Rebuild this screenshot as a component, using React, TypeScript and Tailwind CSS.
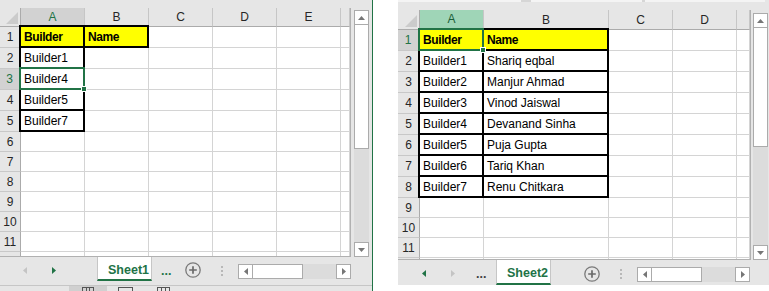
import React from 'react';

// Two Excel windows side by side, each showing a small sheet.

type Cell = { t?: string; b?: boolean; y?: boolean; box?: boolean; sel?: boolean };
type Col = { label: string; w: string; hl?: 'gray' | 'green' };
type Row = { n: string; h: string; hl?: boolean; last?: boolean; cells: Cell[] };

const Tri = ({ dir, color, className = '' }: { dir: 'up' | 'down' | 'left' | 'right'; color: string; className?: string }) => {
  const pts = { up: '0,4 3.5,0 7,4', down: '0,0 7,0 3.5,4', left: '4,0 4,7 0,3.5', right: '0,0 0,7 4,3.5' }[dir];
  const vertical = dir === 'up' || dir === 'down';
  return (
    <svg width={vertical ? 7 : 4} height={vertical ? 4 : 7} viewBox={vertical ? '0 0 7 4' : '0 0 4 7'} className={`shrink-0 ${className}`}>
      <polygon points={pts} fill={color} />
    </svg>
  );
};

const ArrowBox = ({ dir }: { dir: 'up' | 'down' | 'left' | 'right' }) => (
  <div className="flex h-[15px] w-[15px] shrink-0 items-center justify-center border border-[#ababab] bg-white">
    <Tri dir={dir} color="#767676" />
  </div>
);

const VScroll = ({ pad, thumb }: { pad: string; thumb: string }) => (
  <div className={`flex w-[15px] shrink-0 flex-col ${pad}`}>
    <ArrowBox dir="up" />
    <div className={`${thumb} border-x border-b border-[#ababab] bg-white`} />
    <div className="flex-1 bg-[#dcdcdc]" />
    <ArrowBox dir="down" />
  </div>
);

const HScroll = () => (
  <div className="mt-[7px] flex h-[15px] w-[113px] shrink-0">
    <ArrowBox dir="left" />
    <div className="w-[50px] border-y border-r border-[#ababab] bg-white" />
    <div className="flex-1 bg-[#dcdcdc]" />
    <ArrowBox dir="right" />
  </div>
);

const AddSheet = ({ className }: { className: string }) => (
  <svg width="16" height="16" viewBox="0 0 16 16" className={className}>
    <circle cx="8" cy="8" r="7.2" fill="none" stroke="#7a7a7a" strokeWidth="1.3" />
    <path d="M8 4.2v7.6M4.2 8h7.6" stroke="#6a6a6a" strokeWidth="1.7" />
  </svg>
);

const Grip = ({ className }: { className: string }) => (
  <div className={`flex flex-col gap-[2px] ${className}`}>
    <div className="h-[2px] w-[2px] bg-[#b8b8b8]" />
    <div className="h-[2px] w-[2px] bg-[#b8b8b8]" />
    <div className="h-[2px] w-[2px] bg-[#b8b8b8]" />
  </div>
);

const SheetTab = ({ name, h }: { name: string; h: string }) => (
  <div className={`flex w-[55px] shrink-0 items-center border-x border-b-2 border-x-[#c6c6c6] border-b-[#217346] bg-white pl-[10px] pt-[4px] text-[12.5px] font-bold text-[#217346] ${h}`}>
    {name}
  </div>
);

function DataCell({ c, w, h, last }: { c: Cell; w: string; h: string; last?: boolean }) {
  return (
    <div
      className={`relative flex shrink-0 items-center whitespace-nowrap border-r border-[#d4d4d4] pl-[3px] ${last ? '' : 'border-b'} ${w} ${h} ${c.y ? 'bg-[#ffff00]' : 'bg-white'} ${c.b ? 'text-[12px] font-bold tracking-[-0.4px]' : ''}`}
    >
      {c.t}
      {c.box && <div className="absolute -top-[2px] -left-[2px] -right-px -bottom-px z-10 border-2 border-black" />}
      {c.sel && (
        <div className="absolute -top-[2px] -left-[2px] -right-px -bottom-px z-20 border-2 border-[#217346]">
          <div className="absolute -right-[4px] -bottom-[4px] h-[6px] w-[6px] border border-white bg-[#217346]" />
        </div>
      )}
    </div>
  );
}

function Grid({ cols, rows, hdrW, hdrH, width }: { cols: Col[]; rows: Row[]; hdrW: string; hdrH: string; width: string }) {
  return (
    <div className={`flex shrink-0 flex-col overflow-hidden border-r border-b border-[#b1b1b1] bg-white text-[12px] ${width}`}>
      <div className="flex">
        <div className={`flex shrink-0 items-end justify-end border-r border-b border-[#ababab] bg-[#e6e6e6] pr-[2px] pb-[2px] ${hdrW} ${hdrH}`}>
          <svg width="12" height="12" viewBox="0 0 12 12">
            <polygon points="12,0 12,12 0,12" fill="#cbcbcb" />
          </svg>
        </div>
        {cols.map((col, i) => (
          <div
            key={i}
            className={`flex shrink-0 items-center justify-center border-r border-r-[#c6c6c6] ${col.w} ${hdrH} ${
              col.hl === 'gray'
                ? 'border-b-2 border-b-[#217346] bg-[#d2d2d2] text-[#217346]'
                : col.hl === 'green'
                ? 'border-b-2 border-b-[#217346] bg-[#9fd5b7] text-[#1b5e38]'
                : 'border-b border-b-[#ababab] bg-[#e6e6e6] text-[#262626]'
            }`}
          >
            {col.label}
          </div>
        ))}
      </div>
      {rows.map((row, r) => (
        <div key={r} className="flex">
          <div
            className={`flex shrink-0 items-center justify-center overflow-hidden border-b-[#c8c8c8] ${row.last ? '' : 'border-b'} ${hdrW} ${row.h} ${
              row.hl ? 'border-r-2 border-r-[#217346] bg-[#d2d2d2] text-[#217346]' : 'border-r border-r-[#ababab] bg-[#e6e6e6] text-[#262626]'
            }`}
          >
            {row.n}
          </div>
          {cols.map((col, i) => (
            <DataCell key={i} c={row.cells[i] ?? {}} w={col.w} h={row.h} last={row.last} />
          ))}
        </div>
      ))}
    </div>
  );
}

const blank = (n: string, h: string): Row => ({ n, h, cells: [] });

const leftCols: Col[] = [
  { label: 'A', w: 'w-[64px]', hl: 'gray' },
  { label: 'B', w: 'w-[64px]' },
  { label: 'C', w: 'w-[64px]' },
  { label: 'D', w: 'w-[64px]' },
  { label: 'E', w: 'w-[64px]' },
  { label: '', w: 'w-[9px]' },
];

const leftRows: Row[] = [
  { n: '1', h: 'h-[21px]', cells: [{ t: 'Builder', b: true, y: true, box: true }, { t: 'Name', b: true, y: true, box: true }] },
  { n: '2', h: 'h-[21px]', cells: [{ t: 'Builder1', box: true }] },
  { n: '3', h: 'h-[21px]', hl: true, cells: [{ t: 'Builder4', box: true, sel: true }] },
  { n: '4', h: 'h-[21px]', cells: [{ t: 'Builder5', box: true }] },
  { n: '5', h: 'h-[21px]', cells: [{ t: 'Builder7', box: true }] },
  blank('6', 'h-[20px]'),
  blank('7', 'h-[20px]'),
  blank('8', 'h-[20px]'),
  blank('9', 'h-[20px]'),
  blank('10', 'h-[20px]'),
  blank('11', 'h-[20px]'),
  { n: '', h: 'h-[4px]', last: true, cells: [] },
];

const rightCols: Col[] = [
  { label: 'A', w: 'w-[64px]', hl: 'green' },
  { label: 'B', w: 'w-[125px]' },
  { label: 'C', w: 'w-[64px]' },
  { label: 'D', w: 'w-[64px]' },
  { label: '', w: 'w-[13px]' },
];

const people = [
  ['Builder1', 'Shariq eqbal'],
  ['Builder2', 'Manjur Ahmad'],
  ['Builder3', 'Vinod Jaiswal'],
  ['Builder4', 'Devanand Sinha'],
  ['Builder5', 'Puja Gupta'],
  ['Builder6', 'Tariq Khan'],
  ['Builder7', 'Renu Chitkara'],
];

const rightRows: Row[] = [
  { n: '1', h: 'h-[21px]', hl: true, cells: [{ t: 'Builder', b: true, y: true, box: true, sel: true }, { t: 'Name', b: true, y: true, box: true }] },
  ...people.map(([a, b], i) => ({ n: String(i + 2), h: 'h-[21px]', cells: [{ t: a, box: true }, { t: b, box: true }] })),
  blank('9', 'h-[20px]'),
  blank('10', 'h-[20px]'),
  blank('11', 'h-[20px]'),
  { n: '', h: 'h-[1px]', last: true, cells: [] },
];

export default function App() {
  return (
    <div className="flex h-[291px] w-[769px] overflow-hidden bg-white font-['Liberation_Sans',Arial,sans-serif] text-[12.2px] text-black">
      {/* left window */}
      <div className="flex w-[372px] shrink-0 flex-col bg-[#e6e6e6]">
        <div className="h-[8px]" />
        <div className="flex">
          <Grid cols={leftCols} rows={leftRows} hdrW="w-[21px]" hdrH="h-[19px]" width="w-[351px]" />
          <div className="ml-[3px] flex">
            <VScroll pad="pt-[2px]" thumb="h-[124px]" />
          </div>
        </div>
        <div className="flex h-[28px] items-start">
          <div className="flex h-[24px] w-[97px] shrink-0 items-center pl-[23px] pt-[3px]">
            <Tri dir="left" color="#c4c4c4" />
            <Tri dir="right" color="#217346" className="ml-[25px]" />
          </div>
          <SheetTab name="Sheet1" h="h-[24px]" />
          <div className="flex h-[24px] w-[30px] shrink-0 items-center pl-[9px] pt-[4px] text-[12.5px] font-bold text-[#217346]">...</div>
          <div className="w-[28px] shrink-0 pl-[3px]">
            <AddSheet className="mt-[5px]" />
          </div>
          <div className="w-[28px] shrink-0 pl-[11px]">
            <Grip className="mt-[9px]" />
          </div>
          <HScroll />
        </div>
        <div className="flex h-[6px] border-t border-[#c6c6c6]">
          <div className="ml-[69px] flex h-full w-[38px] justify-center bg-[#d0d0d0] pt-[1px]">
            <div className="flex h-[5px] w-[12px] justify-evenly border-x border-t border-[#555]">
              <div className="w-px bg-[#555]" />
              <div className="w-px bg-[#555]" />
            </div>
          </div>
          <div className="ml-[11px] mt-[1px] h-[5px] w-[15px] border-x border-t border-[#555]" />
          <div className="ml-[24px] mt-[1px] flex h-[5px] w-[13px] justify-evenly border-x border-t border-[#555]">
            <div className="w-px bg-[#555]" />
            <div className="w-px bg-[#555]" />
          </div>
        </div>
      </div>

      {/* window border and gap */}
      <div className="w-px shrink-0 bg-[#217346]" />
      <div className="w-[25px] shrink-0 bg-white" />

      {/* right window */}
      <div className="flex w-[371px] shrink-0 flex-col bg-[#e6e6e6]">
        <div className="h-[10px]">
          <div className="flex h-[2px]">
            <div className="w-[123px] bg-[#f4f4f4]" />
            <div className="w-[10px] bg-[#d6d6d6]" />
            <div className="w-[111px] bg-[#f4f4f4]" />
            <div className="w-[3px] bg-[#d6d6d6]" />
            <div className="w-[120px] bg-[#f4f4f4]" />
          </div>
        </div>
        <div className="flex">
          <Grid cols={rightCols} rows={rightRows} hdrW="w-[22px]" hdrH="h-[20px]" width="w-[353px]" />
          <div className="ml-[2px] flex">
            <VScroll pad="pt-[3px]" thumb="h-[119px]" />
          </div>
        </div>
        <div className="flex h-[25px] items-start">
          <div className="flex h-[25px] w-[70px] shrink-0 items-center pl-[24px] pt-[2px]">
            <Tri dir="left" color="#217346" />
            <Tri dir="right" color="#c4c4c4" className="ml-[25px]" />
          </div>
          <div className="flex h-[25px] w-[28px] shrink-0 items-center pl-[8px] pt-[4px] text-[12.5px] font-bold text-[#404040]">...</div>
          <SheetTab name="Sheet2" h="h-[25px]" />
          <div className="w-[58px] shrink-0 pl-[33px]">
            <AddSheet className="mt-[6px]" />
          </div>
          <div className="w-[28px] shrink-0 pl-[11px]">
            <Grip className="mt-[9px]" />
          </div>
          <HScroll />
        </div>
        <div className="h-[6px] bg-white" />
      </div>
    </div>
  );
}
